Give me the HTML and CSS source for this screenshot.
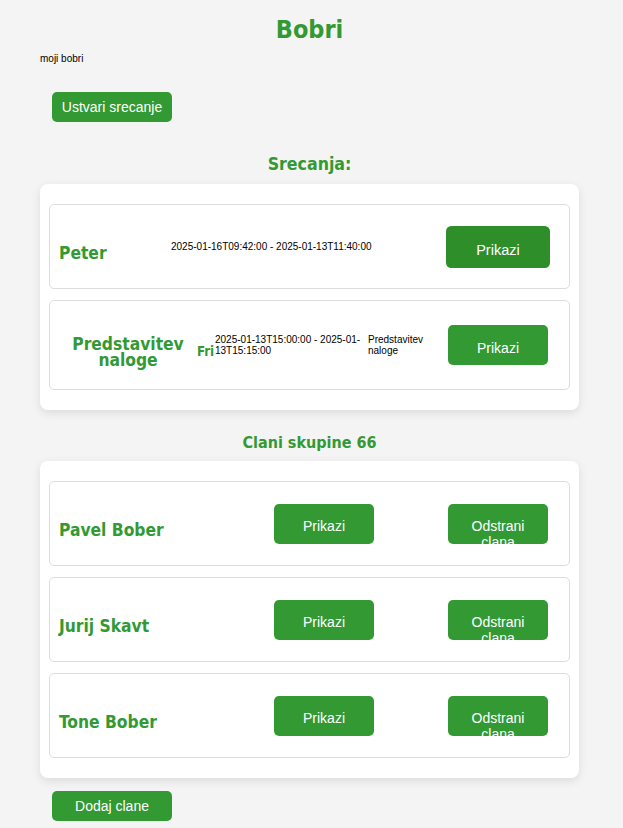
FILE: index.html
```html
<!DOCTYPE html>
<html lang="sl">
<head>
<meta charset="utf-8">
<title>Bobri</title>
<link rel="stylesheet" href="styles.css">
</head>
<body>
<div class="page">
  <h1 class="title">Bobri</h1>
  <p class="subtitle">moji bobri</p>
  <button class="btn btn-main">Ustvari srecanje</button>

  <h2 class="section-title section-title-lg">Srecanja:</h2>
  <section class="card">
    <div class="row meet-simple">
      <h3 class="name">Peter</h3>
      <p class="info">2025-01-16T09:42:00 - 2025-01-13T11:40:00</p>
      <button class="btn btn-row is-hover">Prikazi</button>
    </div>
    <div class="row meet-full">
      <h3 class="name name-center">Predstavitev naloge</h3>
      <h3 class="day">Fri</h3>
      <p class="info">2025-01-13T15:00:00 - 2025-01-13T15:15:00</p>
      <p class="info">Predstavitev naloge</p>
      <button class="btn btn-row">Prikazi</button>
    </div>
  </section>

  <h2 class="section-title section-title-sm">Clani skupine 66</h2>
  <section class="card">
    <div class="row member">
      <h3 class="name">Pavel Bober</h3>
      <button class="btn btn-row">Prikazi</button>
      <button class="btn btn-row">Odstrani clana</button>
    </div>
    <div class="row member">
      <h3 class="name">Jurij Skavt</h3>
      <button class="btn btn-row">Prikazi</button>
      <button class="btn btn-row">Odstrani clana</button>
    </div>
    <div class="row member">
      <h3 class="name">Tone Bober</h3>
      <button class="btn btn-row">Prikazi</button>
      <button class="btn btn-row">Odstrani clana</button>
    </div>
  </section>
  <button class="btn btn-main btn-add">Dodaj clane</button>
</div>
</body>
</html>
```
FILE: styles.css
```css
html, body {
  margin: 0;
  padding: 0;
}
body {
  background: #f4f4f4;
  font-family: "Liberation Sans", Arial, sans-serif;
  color: #000;
}
.page {
  padding: 15px 12px 0 8px;
}
.title,
.section-title,
.name,
.day {
  font-family: "DejaVu Sans Condensed", "DejaVu Sans", sans-serif;
  font-stretch: condensed;
  font-weight: bold;
  color: #339933;
}
.title {
  margin: 0;
  font-size: 25px;
  line-height: 30px;
  text-align: center;
}
.subtitle {
  margin: 7.5px 0 0 32px;
  font-size: 10px;
  line-height: 12px;
}
.btn {
  display: block;
  box-sizing: border-box;
  border: none;
  border-radius: 5px;
  background: #339933;
  color: #fff;
  font-family: "Liberation Sans", Arial, sans-serif;
  font-size: 14px;
  line-height: 16px;
  text-align: center;
  cursor: pointer;
}
.btn-main {
  width: 120px;
  height: 30px;
  padding: 7px 0;
  margin: 27.5px 0 0 44px;
  white-space: nowrap;
}
.btn-add {
  margin-top: 13px;
}
.section-title {
  margin: 0;
  text-align: center;
}
.section-title-lg {
  margin-top: 32px;
  font-size: 17.6px;
  line-height: 21px;
}
.section-title-sm {
  margin-top: 23px;
  font-size: 16px;
  line-height: 19px;
}
.card {
  margin: 9px 32px 0 32px;
  padding: 20px 9px;
  background: #fff;
  border-radius: 8px;
  box-shadow: 0 3px 10px rgba(0, 0, 0, 0.1);
  display: flex;
  flex-direction: column;
  gap: 11px;
}
.row {
  display: grid;
  align-items: center;
  box-sizing: border-box;
  border: 1px solid #dddddd;
  border-radius: 5px;
  padding: 21.5px 21px 21.5px 9px;
}
.meet-simple {
  grid-template-columns: 112px 1fr 100px;
}
.meet-full {
  grid-template-columns: 138px 18px 153px 1fr 100px;
}
.member {
  grid-template-columns: 1fr 100px 100px;
  column-gap: 74px;
}
.name,
.day {
  margin: 13px 0 0;
  line-height: 16px;
}
.name {
  font-size: 17.3px;
}
.name-center {
  text-align: center;
}
.day {
  font-size: 13.2px;
}
.info {
  margin: 0;
  font-size: 10px;
  line-height: 11.5px;
}
.btn-row {
  width: 100px;
  height: 40px;
  padding: 14.5px 10px 9.5px;
  overflow: hidden;
}
.is-hover {
  background: #2e8e29;
  transform: scale(1.04, 1.05);
}
```
